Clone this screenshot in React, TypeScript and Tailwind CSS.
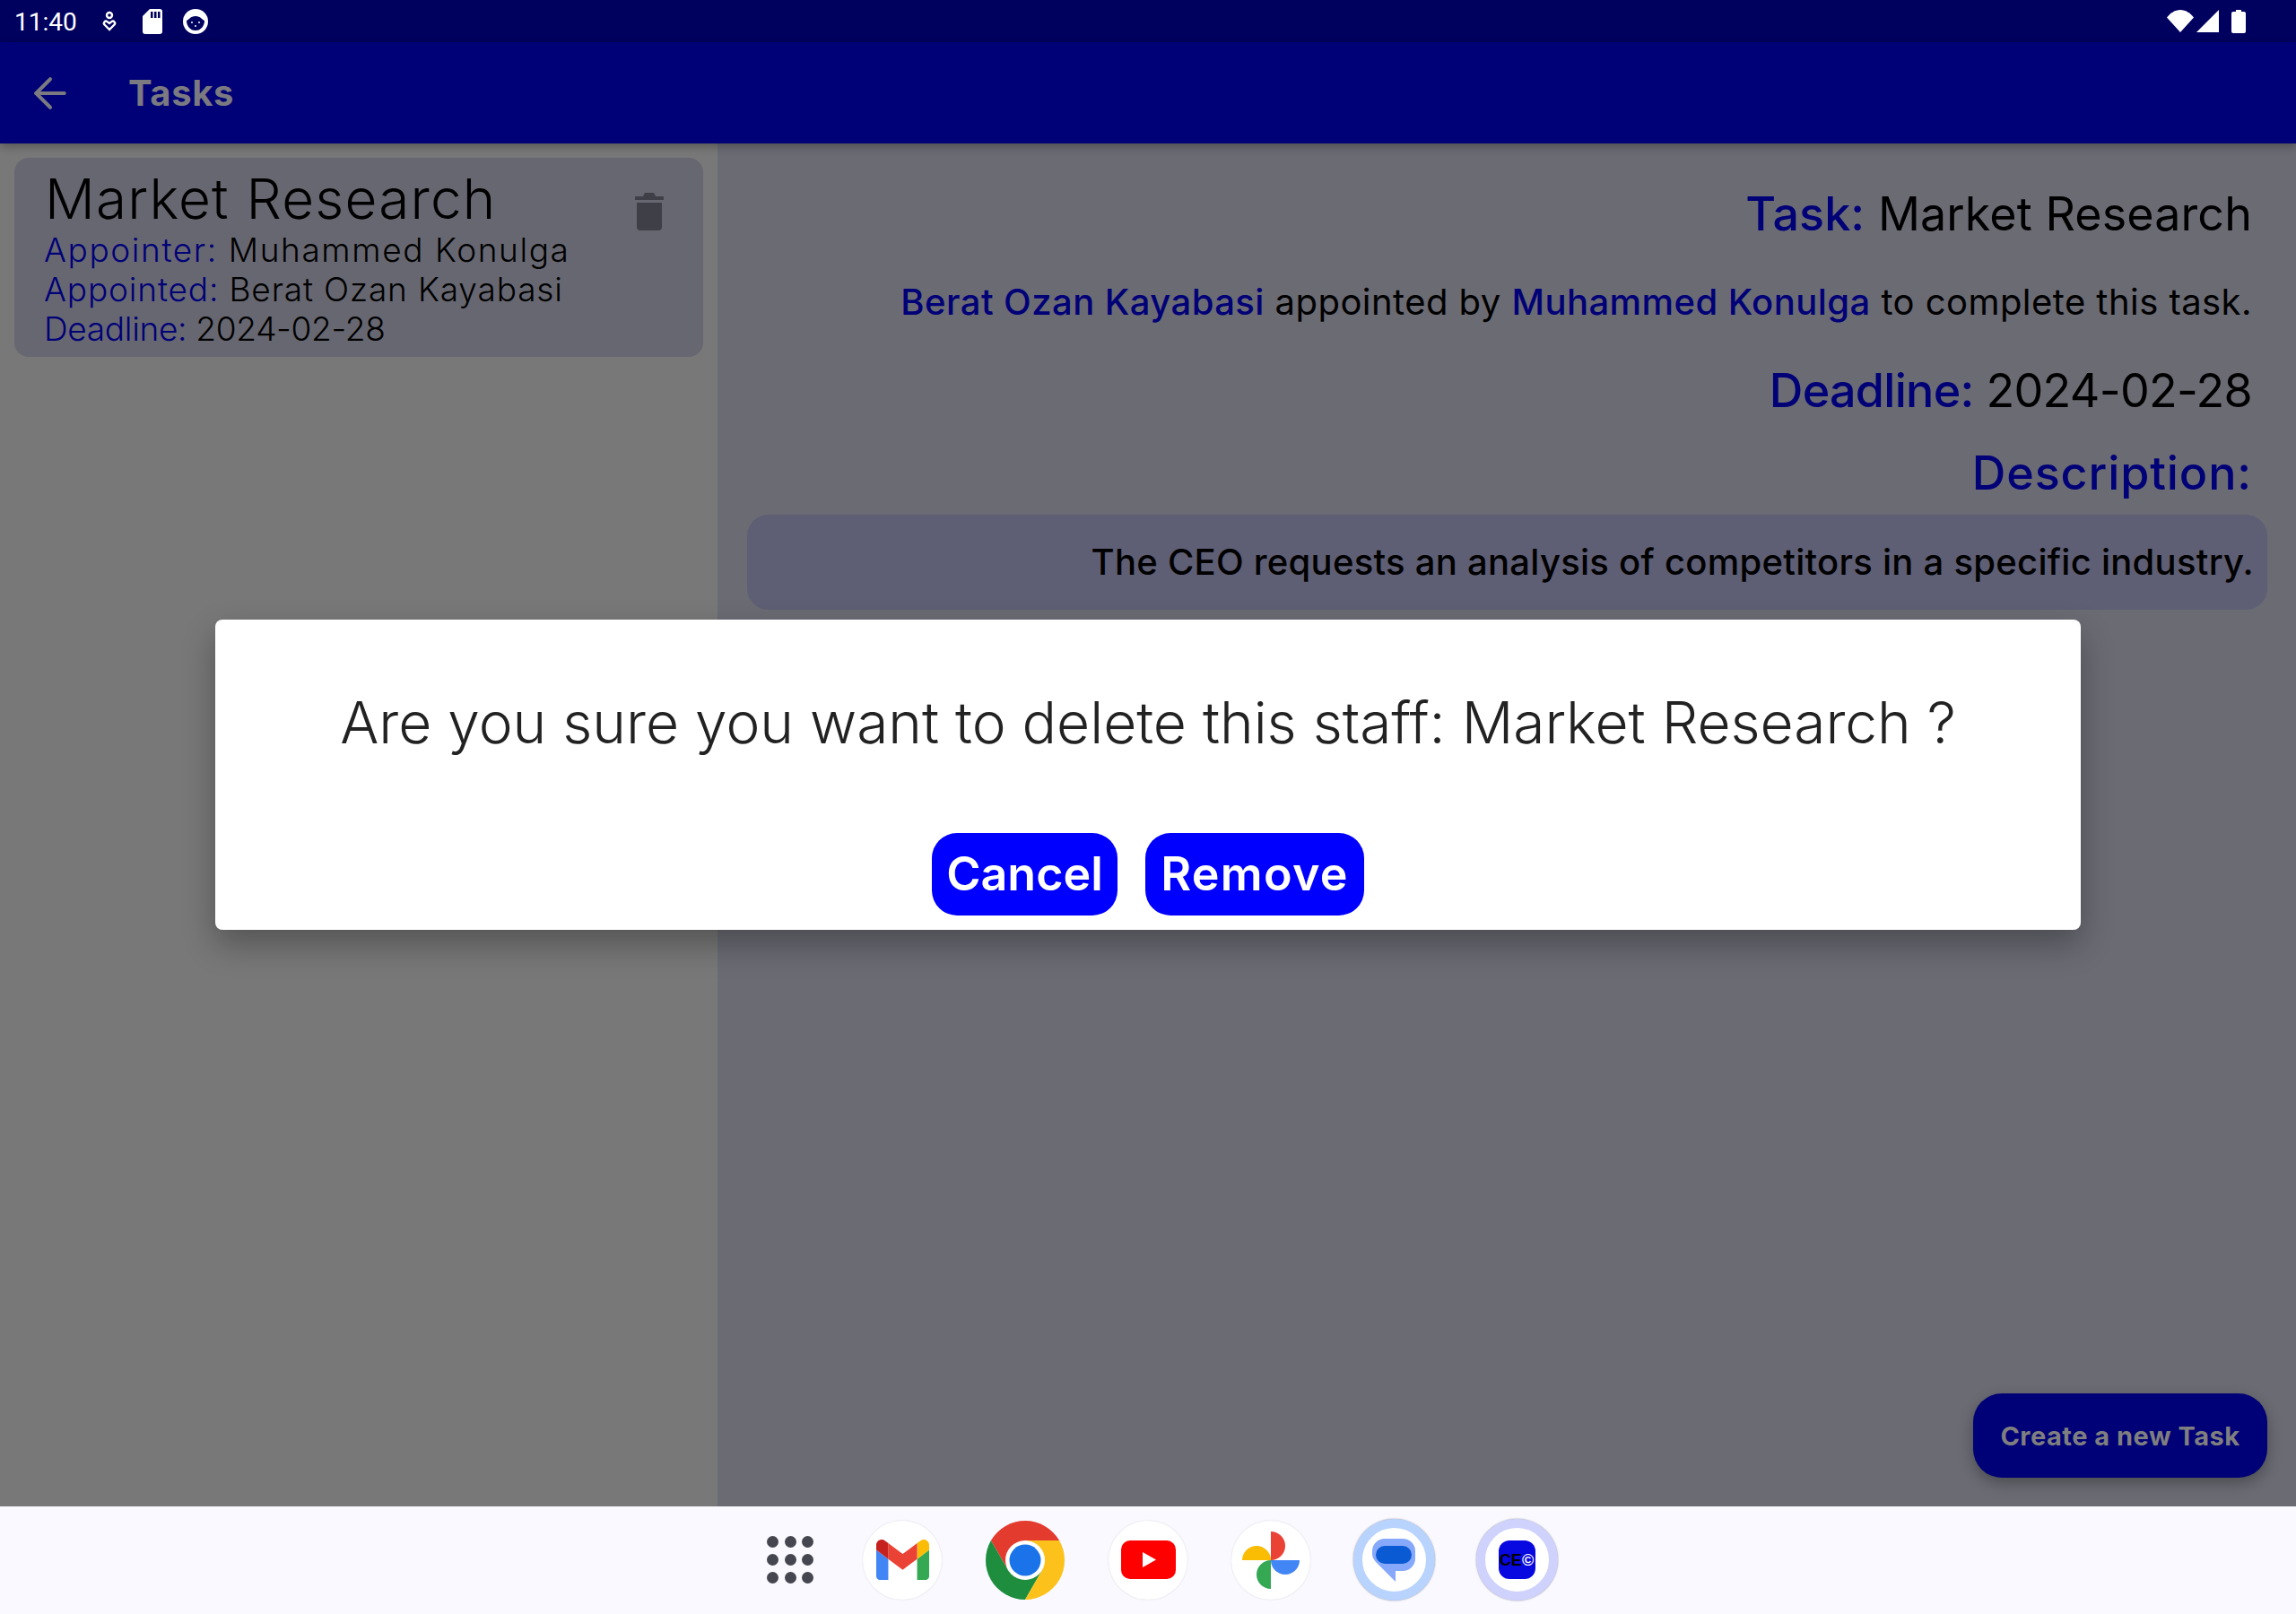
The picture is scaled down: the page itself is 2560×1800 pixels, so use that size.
import { ArrowLeft } from "lucide-react";

const font = "font-['Inter','Liberation_Sans',sans-serif]";

const StatusBar = () => (
  <div className="h-[47px] shrink-0 bg-[#00005f] flex items-center pl-[16px] pr-[56px] text-white">
    <span className="font-['Roboto',sans-serif] text-[28px] leading-none w-[71px] mt-[3px]">11:40</span>
    <svg className="ml-[26px]" width="18" height="24" viewBox="0 0 18 24" fill="none" stroke="#fff" strokeWidth="2.4">
      <circle cx="9" cy="5" r="3" />
      <path d="M9 21 3.5 15.5c-1.8-2 .8-5 3-3.4L9 14l2.500-1.900c2.200-1.600 4.800 1.400 3 3.400z" />
    </svg>
    <svg className="ml-[28px]" width="22" height="28" viewBox="0 0 22 28">
      <path fill="#fff" d="M8 0h11a3 3 0 0 1 3 3v22a3 3 0 0 1-3 3H3a3 3 0 0 1-3-3V8z" />
      <path fill="#00005f" d="M9 3h2.500v7H9zM13 3h2.500v7H13zM17 3h2.500v7H17z" />
    </svg>
    <svg className="ml-[23px]" width="28" height="28" viewBox="0 0 28 28">
      <circle cx="14" cy="14" r="14" fill="#fff" />
      <path fill="#00005f" d="M4 13c3-1 4-5 10-5s7 4 10 5c0 6-4 11-10 11S4 19 4 13z" />
      <circle cx="10" cy="15" r="1" fill="#fff" />
      <circle cx="18" cy="15" r="1" fill="#fff" />
      <circle cx="14" cy="19" r="1" fill="#fff" />
    </svg>
    <div className="ml-auto flex items-center gap-[14px]">
      <div className="flex items-end gap-[3px]">
        <svg width="30" height="25" viewBox="0 0 30 25">
          <path fill="#fff" d="M15 25 0 8.500C4 3.500 9 0 15 0s11 3.500 15 8.500z" />
        </svg>
        <svg width="25" height="25" viewBox="0 0 25 25">
          <path fill="#fff" d="M25 0v25H0z" />
        </svg>
      </div>
      <svg width="16" height="26" viewBox="0 0 16 26">
        <path fill="#fff" d="M5 0h6v2h3a2 2 0 0 1 2 2v20a2 2 0 0 1-2 2H2a2 2 0 0 1-2-2V4a2 2 0 0 1 2-2h3z" />
      </svg>
    </div>
  </div>
);

const TaskCard = () => (
  <div className="relative h-[222px] rounded-[16px] bg-[#676771] pl-[34px] pt-[10px] text-black">
    <div className="text-[62px] leading-[71px] font-light tracking-[1.2px]">Market Research</div>
    <div className="text-[37px] leading-[44px] font-light -ml-[1px]">
      <div className="tracking-[1.6px]"><span className="text-[#000077]">Appointer:</span> Muhammed Konulga</div>
      <div className="tracking-[0.85px]"><span className="text-[#000077]">Appointed:</span> Berat Ozan Kayabasi</div>
      <div className="tracking-[-0.3px]"><span className="text-[#000077]">Deadline:</span> 2024-02-28</div>
    </div>
    <svg className="absolute left-[692px] top-[39px]" width="32" height="42" viewBox="0 0 32 42">
      <path fill="#3f3f47" d="M2 11h28v27a4 4 0 0 1-4 4H6a4 4 0 0 1-4-4zM0 4h9l2-4h10l2 4h9v4H0z" />
    </svg>
  </div>
);

const DetailPanel = () => (
  <div className="flex-1 bg-[#6b6b74] pl-[33px] pr-[32px] text-right text-black">
    <div className="pr-[17px]">
      <div className="mt-[48px] text-[52px] leading-[62px] tracking-[0.1px]">
        <span className="font-medium text-[#000077]">Task:</span> Market Research
      </div>
      <div className="mt-[43px] text-[40px] leading-[48px] tracking-[0.45px]">
        <span className="font-medium text-[#000077]">Berat Ozan Kayabasi</span> appointed by{" "}
        <span className="font-medium text-[#000077]">Muhammed Konulga</span> to complete this task.
      </div>
      <div className="mt-[44px] text-[52px] leading-[62px] tracking-[-0.7px]">
        <span className="font-medium text-[#000077]">Deadline:</span> 2024-02-28
      </div>
      <div className="mt-[30px] text-[52px] leading-[62px] font-medium text-[#000077] tracking-[0.9px]">Description:</div>
    </div>
    <div className="mt-[15px] h-[106px] rounded-[24px] bg-[#5e5e74] pr-[15px] pt-[29px] text-[40px] leading-[48px] font-medium tracking-[0.27px]">
      The CEO requests an analysis of competitors in a specific industry.
    </div>
  </div>
);

const ChromeIcon = () => (
  <svg width="88" height="88" viewBox="0 0 88 88">
    <path fill="#e33b2e" d="M44 44 25 55 5.900 22A44 44 0 0 1 82.100 22H44z" />
    <path fill="#1e8e3e" d="M44 44 63 55 44 88A44 44 0 0 1 5.900 22L25 55z" />
    <path fill="#fcc21b" d="M44 44V22H82.100A44 44 0 0 1 44 88L63 55z" />
    <circle cx="44" cy="44" r="22" fill="#fff" />
    <circle cx="44" cy="44" r="17.500" fill="#1a73e8" />
  </svg>
);

const IconCircle = ({ children }: { children: React.ReactNode }) => (
  <div className="size-[88px] rounded-full bg-white shadow-[0_0_2px_rgba(0,0,0,0.15)] flex items-center justify-center">
    {children}
  </div>
);

const Dock = () => (
  <div className="h-[120px] shrink-0 bg-[#f9f9ff] flex items-center pl-[855px] gap-[49px] pb-[1px]">
    <div className="w-[52px] mr-[6px] grid grid-cols-3 gap-x-[7px] gap-y-[7px]">
      {Array.from({ length: 9 }).map((_, i) => (
        <div key={i} className="size-[13px] rounded-full bg-[#45464f]" />
      ))}
    </div>
    <IconCircle>
      <svg width="59" height="45" viewBox="0 0 52.420 40">
        <path fill="#4285f4" d="M3.580 40h8.350V19.270L0 10.270v26.150C0 38.400 1.600 40 3.580 40" />
        <path fill="#34a853" d="M40.500 40h8.350c1.980 0 3.570-1.600 3.570-3.580V10.270l-11.920 9" />
        <path fill="#fbbc04" d="M40.500 3.580v15.700l11.920-9V5.370c0-4.420-5.050-6.940-8.580-4.280" />
        <path fill="#ea4335" d="M11.930 19.270V3.580L26.200 14.300l14.300-10.720v15.700L26.200 30" />
        <path fill="#c5221f" d="M0 5.370v4.900l11.930 9V3.580L8.580 1.080C5.050-1.580 0 .95 0 5.370" />
      </svg>
    </IconCircle>
    <div className="size-[88px]">
      <ChromeIcon />
    </div>
    <IconCircle>
      <svg width="61" height="43" viewBox="0 0 61 43">
        <rect width="61" height="43" rx="10" fill="#f00" />
        <path fill="#fff" d="M24 13 39 21.500 24 30z" />
      </svg>
    </IconCircle>
    <IconCircle>
      <svg width="88" height="88" viewBox="0 0 88 88">
        <path fill="#ea4335" d="M44 12A16 16 0 0 1 44 44z" />
        <path fill="#fbbc04" d="M12 44A16 16 0 0 1 44 44z" />
        <path fill="#4285f4" d="M76 44A16 16 0 0 1 44 44z" />
        <path fill="#34a853" d="M44 76A16 16 0 0 1 44 44z" />
      </svg>
    </IconCircle>
    <div className="size-[88px] flex items-center justify-center">
      <div className="size-[91px] shrink-0 rounded-full bg-white border-[10px] border-[#b8d3fd] shadow-[0_0_2px_rgba(0,0,0,0.4)] flex items-center justify-center">
        <svg width="48" height="48" viewBox="0 0 48 48">
          <path fill="#86a9fb" d="M14 0h20a14 14 0 0 1 14 14v8a14 14 0 0 1-14 14h-8v12L4 26A14 14 0 0 1 0 14 14 14 0 0 1 14 0z" />
          <rect x="4" y="8" width="40" height="20" rx="10" fill="#0a5ad4" />
        </svg>
      </div>
    </div>
    <div className="size-[88px] flex items-center justify-center">
      <div className="size-[91px] shrink-0 rounded-full bg-white border-[10px] border-[#cfd2fc] shadow-[0_0_2px_rgba(0,0,0,0.4)] flex items-center justify-center">
        <div className="w-[41px] h-[43px] shrink-0 rounded-[12px] bg-[#0808e0] flex items-center justify-center font-['Liberation_Sans',sans-serif] text-[18px] font-bold leading-none text-black">
          CE<span className="text-white">©</span>
        </div>
      </div>
    </div>
  </div>
);

export default function App() {
  return (
    <div className={`${font} relative h-[1800px] w-[2560px] overflow-hidden flex flex-col bg-[#787878]`}>
      <StatusBar />
      <div className="relative z-10 h-[113px] shrink-0 bg-[#000077] shadow-[0_3px_10px_rgba(0,0,0,0.3)] flex items-center pl-[29px] text-[#7a7a80]">
        <ArrowLeft size={54} strokeWidth={1.8} />
        <span className="ml-[60px] text-[40px] font-bold tracking-[0.6px]">Tasks</span>
      </div>
      <div className="relative flex-1 flex">
        <div className="w-[800px] bg-[#787878] px-[16px] pt-[16px]">
          <TaskCard />
        </div>
        <DetailPanel />
        <button className="absolute left-[2200px] top-[1394px] w-[328px] h-[94px] rounded-[32px] bg-[#000077] pt-[2px] text-[#7f7f7f] text-[29px] font-bold tracking-[0.5px] shadow-[0_6px_16px_rgba(0,0,0,0.3)]">
          Create a new Task
        </button>
      </div>
      <Dock />
      {/* delete dialog */}
      <div className="absolute z-20 left-[240px] top-[691px] w-[2080px] h-[346px] rounded-[8px] bg-white shadow-[0_16px_36px_rgba(0,0,0,0.3)] flex flex-col items-center">
        <div className="mt-[77px] text-[64px] leading-[76px] font-light text-[#222]">
          Are you sure you want to delete this staff: Market Research ?
        </div>
        <div className="mt-[85px] flex gap-[31px]">
          <button className="w-[207px] h-[92px] rounded-[28px] bg-[#0000ff] text-white text-[52px] font-semibold">Cancel</button>
          <button className="w-[244px] h-[92px] rounded-[28px] bg-[#0000ff] text-white text-[52px] font-semibold tracking-[1.3px]">Remove</button>
        </div>
      </div>
    </div>
  );
}
